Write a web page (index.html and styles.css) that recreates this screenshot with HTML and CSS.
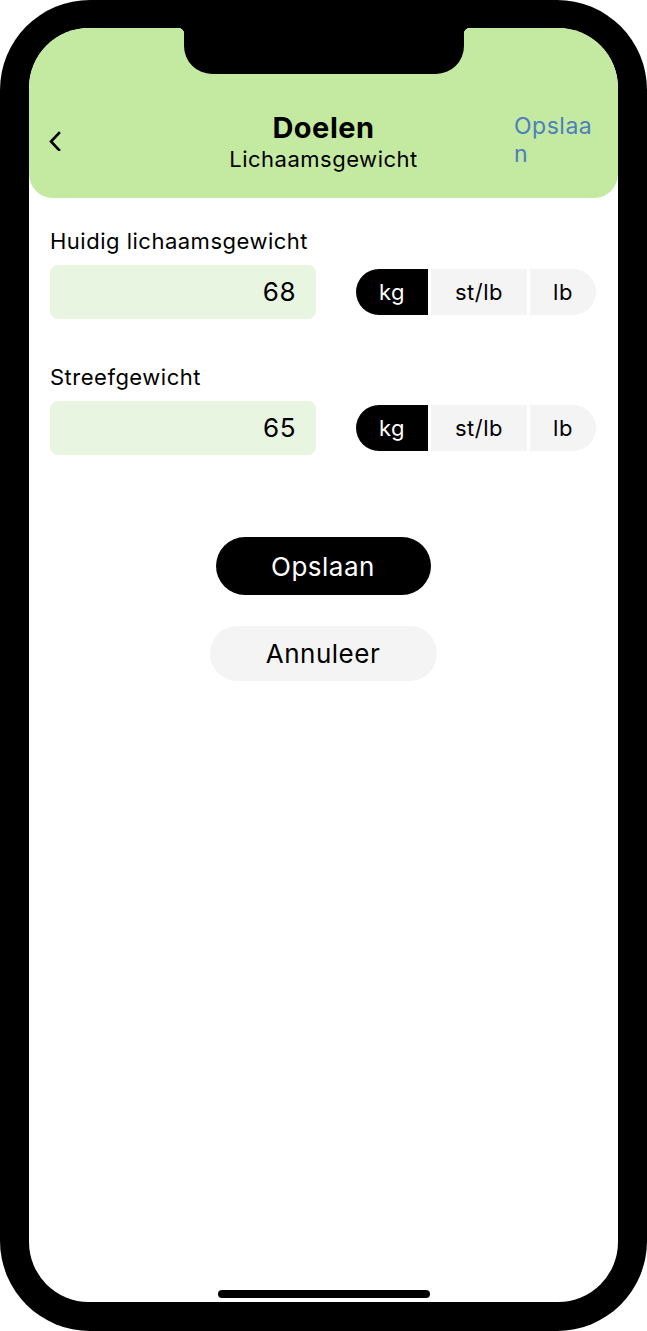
FILE: index.html
```html
<!DOCTYPE html>
<html lang="nl">
<head>
  <meta charset="UTF-8">
  <title>Doelen | Lichaamsgewicht</title>
  <link rel="stylesheet" href="styles.css">
</head>
<body>
  <div class="phone">
    <div class="screen">
      <div class="notch"></div>

      <header class="topbar">
        <button class="back" aria-label="Terug">
          <svg width="16" height="20" viewBox="0 0 16 20"><path d="M11 2 L3 10.5 L11 19" fill="none" stroke="#000" stroke-width="2.6" stroke-linecap="square"/></svg>
        </button>
        <div class="titles">
          <h1>Doelen</h1>
          <div class="sub">Lichaamsgewicht</div>
        </div>
        <a class="save-link" href="#">Opslaan</a>
      </header>

      <main class="content">
        <section class="field">
          <label>Huidig lichaamsgewicht</label>
          <div class="row">
            <div class="value">68</div>
            <div class="units">
              <span class="unit active">kg</span>
              <span class="unit">st/lb</span>
              <span class="unit">lb</span>
            </div>
          </div>
        </section>

        <section class="field">
          <label>Streefgewicht</label>
          <div class="row">
            <div class="value">65</div>
            <div class="units">
              <span class="unit active">kg</span>
              <span class="unit">st/lb</span>
              <span class="unit">lb</span>
            </div>
          </div>
        </section>

        <div class="actions">
          <button class="btn primary">Opslaan</button>
          <button class="btn secondary">Annuleer</button>
        </div>
      </main>

      <div class="home-bar"></div>
    </div>
  </div>
</body>
</html>
```

FILE: styles.css
```css
* {
  box-sizing: border-box;
}

body {
  margin: 0;
  background: #fff;
  font-family: 'Inter', 'Liberation Sans', sans-serif;
  color: #000;
  letter-spacing: 0.5px;
}

.phone {
  width: 647px;
  height: 1331px;
  background: #000;
  border-radius: 90px;
  padding: 28px 29px 29px 29px;
}

.screen {
  position: relative;
  height: 100%;
  background: #fff;
  border-radius: 60px;
  overflow: hidden;
  display: flex;
  flex-direction: column;
}

.notch {
  position: absolute;
  top: 0;
  left: 155px;
  width: 280px;
  height: 46px;
  background: #000;
  border-radius: 0 0 28px 28px;
}

.notch::before,
.notch::after {
  content: "";
  position: absolute;
  top: 0;
  width: 6px;
  height: 6px;
}

.notch::before {
  left: -6px;
  background: radial-gradient(circle at 0 100%, transparent 6px, #000 6.5px);
}

.notch::after {
  right: -6px;
  background: radial-gradient(circle at 100% 100%, transparent 6px, #000 6.5px);
}

.topbar {
  height: 170px;
  flex: none;
  background: #c4e9a0;
  border-radius: 0 0 24px 24px;
  display: grid;
  grid-template-columns: 82px 1fr 82px;
  align-items: start;
  padding: 84px 22px 0 22px;
}

.back {
  background: none;
  border: 0;
  padding: 0;
  margin: 19px 0 0 -5px;
  width: 20px;
  justify-self: start;
}

.titles {
  text-align: center;
}

.titles h1 {
  margin: 0;
  font-size: 29px;
  font-weight: 700;
  line-height: 32px;
}

.titles .sub {
  font-size: 22px;
  line-height: 30px;
}

.save-link {
  color: #4d7fbd;
  text-decoration: none;
  font-size: 23px;
  line-height: 28px;
  word-break: break-all;
}

.content {
  padding: 29px 22px 0 21px;
}

.field {
  margin-bottom: 44px;
}

.field label {
  display: block;
  font-size: 22px;
  line-height: 28px;
  margin-bottom: 10px;
}

.row {
  display: flex;
  align-items: center;
  justify-content: space-between;
}

.value {
  width: 266px;
  height: 54px;
  background: #e8f5e0;
  border-radius: 8px;
  text-align: right;
  padding-right: 20px;
  font-size: 26px;
  line-height: 54px;
}

.units {
  display: flex;
  gap: 3px;
  width: 240px;
  height: 46px;
  border-radius: 23px;
  overflow: hidden;
}

.unit {
  background: #f4f4f4;
  display: flex;
  align-items: center;
  justify-content: center;
  font-size: 22px;
}

.unit:nth-child(1) { width: 72px; }
.unit:nth-child(2) { width: 96px; }
.unit:nth-child(3) { flex: 1; }

.unit.active {
  background: #000;
  color: #fff;
}

.actions {
  display: flex;
  flex-direction: column;
  align-items: center;
  gap: 31px;
  margin-top: 82px;
}

.btn {
  border: 0;
  font-family: inherit;
  letter-spacing: 0.5px;
  font-size: 26px;
  border-radius: 29px;
}

.btn.primary {
  width: 215px;
  height: 58px;
  background: #000;
  color: #fff;
}

.btn.secondary {
  width: 227px;
  height: 55px;
  background: #f4f4f4;
  color: #000;
}

.home-bar {
  position: absolute;
  bottom: 4px;
  left: 189px;
  width: 212px;
  height: 8px;
  background: #000;
  border-radius: 4px;
}
```
